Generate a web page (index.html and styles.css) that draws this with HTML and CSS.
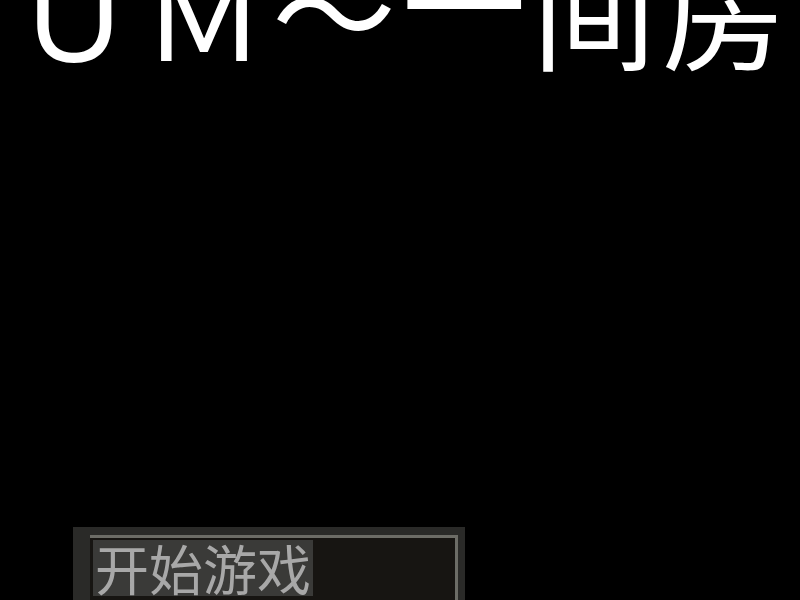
FILE: index.html
```html
<!DOCTYPE html>
<html>
<head>
<meta charset="utf-8">
<link rel="stylesheet" href="styles.css">
</head>
<body>
<div class="screen">
  <h1 class="title">ＵＭ～<span class="raised">一</span>间房</h1>
  <div class="spacer"></div>
  <div class="menu">
    <div class="menu-inner">
      <div class="item selected">开始游戏</div>
    </div>
  </div>
</div>
</body>
</html>
```
FILE: styles.css
```css
html, body {
  margin: 0;
  padding: 0;
  background: #000;
  overflow: hidden;
}
.screen {
  width: 800px;
  height: 600px;
  display: flex;
  flex-direction: column;
  overflow: hidden;
}
.title {
  margin: -58px 0 0 12px;
  height: 130px;
  font-family: "Noto Sans CJK SC", "Noto Sans", sans-serif;
  font-weight: 400;
  font-size: 124px;
  line-height: 130px;
  color: #fff;
  white-space: nowrap;
  letter-spacing: 6px;
  flex-shrink: 0;
}
.raised {
  display: inline-block;
  line-height: 100px;
  vertical-align: 9px;
}
.spacer {
  flex: 1;
}
.menu {
  margin-left: 73px;
  width: 392px;
  height: 73px;
  background: #2a2a28;
  padding: 8px 7px 0 17px;
  box-sizing: border-box;
  flex-shrink: 0;
}
.menu-inner {
  height: 100%;
  border-top: 3px solid #6c6c66;
  border-right: 3px solid #6c6c66;
  background: #171512;
  padding: 2px 0 0 3px;
  box-sizing: border-box;
}
.item {
  display: inline-block;
  font-family: "Noto Sans CJK SC", sans-serif;
  font-size: 54px;
  line-height: 56px;
  color: #a8a8a8;
  background: #3a3a38;
  padding: 0 2px;
}
```
